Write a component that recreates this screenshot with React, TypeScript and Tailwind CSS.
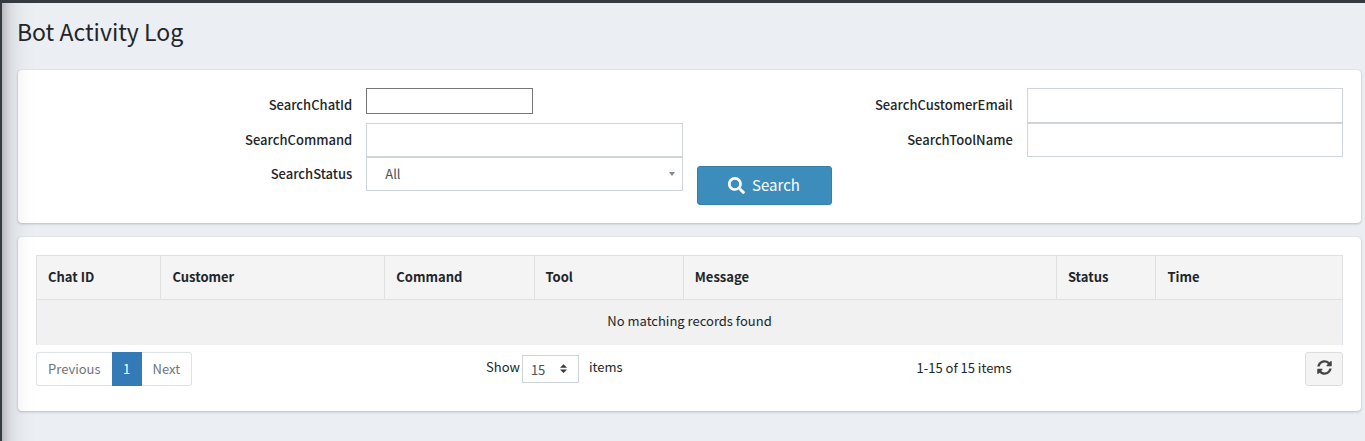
import { useState } from 'react';
import type { ReactNode } from 'react';
import { FaSearch, FaSyncAlt } from 'react-icons/fa';

const columns = [
	{ title: 'Chat ID', width: 'w-[10%]' },
	{ title: 'Customer', width: 'w-[18%]' },
	{ title: 'Command', width: 'w-[12%]' },
	{ title: 'Tool', width: 'w-[12%]' },
	{ title: 'Message', width: 'w-[30%]' },
	{ title: 'Status', width: 'w-[8%]' },
	{ title: 'Time', width: 'w-[15%]' },
];

const inputClass = 'block h-full w-full border border-[#ced4da] bg-white px-3 text-[#495057] outline-none focus:border-[#80bdff]';

function Card({ children }: { children: ReactNode }) {
	return (
		<section className="rounded bg-white p-[18px] shadow-[0_0_1px_rgba(0,0,0,0.125),0_1px_3px_rgba(0,0,0,0.2)]">
			{children}
		</section>
	);
}

// Label on the left half, control on the right half
function Field({ id, label, height, children }: { id: string; label: string; height: string; children: ReactNode }) {
	return (
		<div className={`grid grid-cols-2 gap-3.5 ${height}`}>
			<label htmlFor={id} className="text-right font-medium leading-[34px]">{label}</label>
			<div>{children}</div>
		</div>
	);
}

function SearchPanel() {
	const [status, setStatus] = useState('all');
	return (
		<Card>
			<form className="grid grid-cols-2 gap-3.5" onSubmit={(e) => e.preventDefault()}>
				<div>
					<Field id="SearchChatId" label="SearchChatId" height="h-[35px]">
						<input id="SearchChatId" type="text" className="block h-[26px] w-[167px] border border-[#767676] bg-white px-1" />
					</Field>
					<Field id="SearchCommand" label="SearchCommand" height="h-[34px]">
						<input id="SearchCommand" type="text" className={inputClass} />
					</Field>
					<Field id="SearchStatus" label="SearchStatus" height="h-[34px]">
						<div className="relative h-full">
							<select
								id="SearchStatus"
								value={status}
								onChange={(e) => setStatus(e.target.value)}
								className="block h-full w-full appearance-none border border-[#ced4da] bg-white pl-[18px] pr-6 text-[#495057] outline-none"
							>
								<option value="all">All</option>
								<option value="success">Success</option>
								<option value="failed">Failed</option>
							</select>
							<span className="pointer-events-none absolute right-2 top-[15px] border-x-3 border-t-4 border-x-transparent border-t-[#888]" />
						</div>
					</Field>
				</div>
				<div>
					<Field id="SearchCustomerEmail" label="SearchCustomerEmail" height="h-[35px]">
						<input id="SearchCustomerEmail" type="text" className={inputClass} />
					</Field>
					<Field id="SearchToolName" label="SearchToolName" height="h-[34px]">
						<input id="SearchToolName" type="text" className={inputClass} />
					</Field>
					<button type="submit" className="mt-[9px] flex h-[39px] w-[135px] items-center justify-center gap-[7px] rounded-[3px] border border-[#367fa9] bg-[#3c8dbc] text-[15px] text-white hover:bg-[#367fa9]">
						<FaSearch className="size-[17px]" />
						Search
					</button>
				</div>
			</form>
		</Card>
	);
}

function LogTable() {
	return (
		<table className="w-full table-fixed border-collapse border-x border-t border-[#dee2e6]">
			<thead>
				<tr className="h-11 bg-[#f4f4f4]">
					{columns.map((c) => (
						<th key={c.title} scope="col" className={`border border-[#dfe0e1] px-[11px] pb-0.5 text-left font-bold ${c.width}`}>
							{c.title}
						</th>
					))}
				</tr>
			</thead>
			<tbody>
				<tr className="h-[45px] bg-[#f1f1f1]">
					<td colSpan={columns.length} className="pb-[3px] text-center">No matching records found</td>
				</tr>
			</tbody>
		</table>
	);
}

function TableFooter() {
	const [pageSize, setPageSize] = useState('15');
	return (
		<div className="mt-[7px] mb-[7px] grid grid-cols-[25fr_29fr_34fr_12fr]">
			<nav aria-label="Pages" className="flex h-[34px] leading-8">
				<a href="#previous" className="rounded-l-[3px] border border-r-0 border-[#dee2e6] px-[11px] text-[#6c757d]">Previous</a>
				<a href="#1" aria-current="page" className="w-[30px] border border-[#337ab7] bg-[#337ab7] text-center text-white">1</a>
				<a href="#next" className="rounded-r-[3px] border border-l-0 border-[#dee2e6] px-[11px] text-[#6c757d]">Next</a>
			</nav>
			<div className="flex justify-center pl-1 leading-[30px]">
				<label htmlFor="pageSize">Show</label>
				<div className="relative mt-[3px] mr-2.5 ml-0.5 h-7 w-[57px]">
					<select
						id="pageSize"
						value={pageSize}
						onChange={(e) => setPageSize(e.target.value)}
						className="block h-full w-full appearance-none border border-[#ced4da] bg-white pl-2 leading-7 text-[#495057] outline-none"
					>
						<option>15</option>
						<option>25</option>
						<option>50</option>
					</select>
					<svg viewBox="0 0 4 5" className="pointer-events-none absolute top-[9px] right-3 h-[9px] w-[7px]" fill="#343a40">
						<path d="M2 0L0 2h4zm0 5L0 3h4z" />
					</svg>
				</div>
				<span>items</span>
			</div>
			<div className="text-center leading-8">1-15 of 15 items</div>
			<div className="flex justify-end">
				<button type="button" aria-label="Refresh" className="flex h-[34px] w-[38px] items-center justify-center rounded-[3px] border border-[#ddd] bg-[#f4f4f4] pb-0.5 text-[#444]">
					<FaSyncAlt className="size-[15px]" />
				</button>
			</div>
		</div>
	);
}

export default function App() {
	return (
		<div className="flex min-h-screen flex-col bg-[#ebeef3] font-['Noto_Sans_CJK_SC','Noto_Sans',sans-serif] text-[13px] text-[#212529]">
			<header className="z-20 h-[3px] bg-[#343a40]" />
			<div className="flex flex-1 overflow-hidden">
				{/* Collapsed sidebar, only its edge and shadow show */}
				<aside className="z-10 -my-12 -ml-[250px] w-[252px] shrink-0 bg-[#343a40] shadow-[0_14px_28px_rgba(0,0,0,0.25),0_10px_10px_rgba(0,0,0,0.22)]" />
				<main className="flex-1 pr-1 pb-[30px] pl-4">
					<h1 className="-ml-px pt-[13px] pb-6 text-[23px] leading-[30px]">Bot Activity Log</h1>
					<SearchPanel />
					<div className="mt-3.5">
						<Card>
							<LogTable />
							<TableFooter />
						</Card>
					</div>
				</main>
			</div>
		</div>
	);
}
